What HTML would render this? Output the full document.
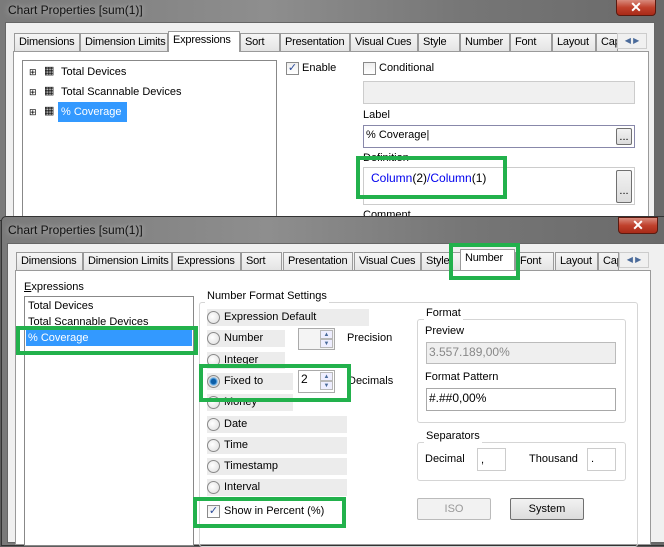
<!DOCTYPE html>
<html><head><meta charset="utf-8"><style>
*{margin:0;padding:0;box-sizing:border-box}
body{width:664px;height:540px;overflow:hidden;background:#5e5e5e;font-family:"Liberation Sans",sans-serif;font-size:11px;color:#000;position:relative}
.a{position:absolute}
.t{position:absolute;white-space:nowrap;font-size:11px;line-height:13px}
.win{position:absolute;background:linear-gradient(90deg,#7a7a7a,#8e8e8e 40%,#767676 70%,#6a6a6a);border:1px solid #333}
.title{position:absolute;left:8px;font-size:12px;color:#111;text-shadow:0 0 6px #ccc}
.close{position:absolute;width:40px;height:17px;background:linear-gradient(#d88a7c,#c0412c 50%,#a82a18);border:1px solid #5a1a10;border-radius:0 0 4px 4px;color:#fff;font-weight:bold;font-size:14px;text-align:center;line-height:15px}
.frame{position:absolute;background:#f0f0f0;border:1px solid #666}
.tab{position:absolute;height:18px;border:1px solid #9a9a9a;border-bottom:none;background:linear-gradient(#f6f6f6,#e4e4e4);font-size:11px;line-height:16px;padding-left:4px;white-space:nowrap;overflow:hidden;letter-spacing:-0.2px}
.tab.act{background:#fff;height:21px;z-index:2}
.panel{position:absolute;border:1px solid #9a9a9a;background:#fff}
.box{position:absolute;border:1px solid #a8a8a8;background:#fff}
.green{position:absolute;border:4px solid #22b14c;z-index:5}
.rad{position:absolute;width:13px;height:13px;border-radius:50%;border:1px solid #8a8a8a;background:radial-gradient(circle at 40% 40%,#fff,#ddd)}
.rbg{position:absolute;background:#ececec;height:17px}
.cb{position:absolute;width:13px;height:13px;border:1px solid #8a8a8a;background:linear-gradient(#eee,#fff);font-size:11px;line-height:11px;text-align:center;color:#2a4a9a}
.grp{position:absolute;border:1px solid #d5d5d5;border-radius:3px}
.btn{position:absolute;border:1px solid #707070;border-radius:2px;background:linear-gradient(#f2f2f2,#dcdcdc);text-align:center;font-size:11px;line-height:20px}
.spin{position:absolute;border:1px solid #aaa;background:#fff}
.arr{position:absolute;width:13px;height:9px;border:1px solid #b8b8b8;background:#eef;font-size:6px;line-height:8px;text-align:center;color:#4a6a9a}
</style></head><body>

<!-- TOP WINDOW -->
<div class="win" style="left:-1px;top:-1px;width:666px;height:222px"></div>
<div class="title" style="top:3px">Chart Properties [sum(1)]</div>
<div class="close" style="left:616px;top:-1px">✕</div>
<div class="frame" style="left:5px;top:22px;width:650px;height:200px;background:#f0f0f0"></div>
<div class="panel" style="left:13px;top:51px;width:636px;height:170px;background:#fff"></div>
<div class="tab" style="left:14px;top:33px;width:66px">Dimensions</div>
<div class="tab" style="left:80px;top:33px;width:88px">Dimension Limits</div>
<div class="tab act" style="left:168px;top:31px;width:72px">Expressions</div>
<div class="tab" style="left:240px;top:33px;width:40px">Sort</div>
<div class="tab" style="left:280px;top:33px;width:70px">Presentation</div>
<div class="tab" style="left:350px;top:33px;width:68px">Visual Cues</div>
<div class="tab" style="left:418px;top:33px;width:42px">Style</div>
<div class="tab" style="left:460px;top:33px;width:50px">Number</div>
<div class="tab" style="left:510px;top:33px;width:42px">Font</div>
<div class="tab" style="left:552px;top:33px;width:44px">Layout</div>
<div class="tab" style="left:596px;top:33px;width:22px">Cap</div>
<div class="a" style="left:617px;top:33px;width:30px;height:16px;background:#f0f0f0;border:1px solid #ccc;font-size:8px;color:#4a6a9a;line-height:14px;text-align:center">◀ ▶</div>
<div class="box" style="left:22px;top:60px;width:255px;height:160px;border-color:#888"></div>
<div class="t" style="left:29px;top:66px;font-size:9px">⊞</div><div class="t" style="left:44px;top:65px">▦</div><div class="t" style="left:61px;top:66px">Total Devices</div>
<div class="t" style="left:29px;top:86px;font-size:9px">⊞</div><div class="t" style="left:44px;top:85px">▦</div><div class="t" style="left:61px;top:86px">Total Scannable Devices</div>
<div class="t" style="left:29px;top:106px;font-size:9px">⊞</div><div class="t" style="left:44px;top:105px">▦</div>
<div class="a" style="left:58px;top:102px;width:69px;height:20px;background:#3399ff"></div><div class="t" style="left:61px;top:106px;color:#fff">% Coverage</div>
<div class="cb" style="left:286px;top:62px">✓</div><div class="t" style="left:302px;top:62px">Enable</div>
<div class="cb" style="left:363px;top:62px"></div><div class="t" style="left:379px;top:62px">Conditional</div>
<div class="box" style="left:363px;top:81px;width:272px;height:23px;background:#f0f0f0;border-color:#ccc"></div>
<div class="t" style="left:363px;top:109px">Label</div>
<div class="box" style="left:363px;top:125px;width:272px;height:23px;border-color:#88a"></div>
<div class="t" style="left:366px;top:129px">% Coverage|</div>
<div class="btn" style="left:616px;top:128px;width:16px;height:17px;line-height:16px">...</div>
<div class="t" style="left:363px;top:152px">Definition</div>
<div class="box" style="left:363px;top:167px;width:272px;height:38px;border-color:#ccc"></div>
<div class="t" style="left:371px;top:172px;font-size:12px;color:#0000ee">Column<span style="color:#000">(2)</span>/Column<span style="color:#000">(1)</span></div>
<div class="btn" style="left:616px;top:170px;width:16px;height:33px;line-height:40px">...</div>
<div class="green" style="left:356px;top:156px;width:151px;height:43px"></div>
<div class="t" style="left:363px;top:209px">Comment</div>

<!-- BOTTOM WINDOW -->
<div class="win" style="left:1px;top:216px;width:665px;height:330px;border-radius:5px 0 0 0"></div>
<div class="title" style="top:223px">Chart Properties [sum(1)]</div>
<div class="close" style="left:618px;top:217px">✕</div>
<div class="frame" style="left:7px;top:243px;width:658px;height:300px"></div>
<div class="panel" style="left:15px;top:270px;width:636px;height:275px;background:#fff"></div>
<div class="tab" style="left:16px;top:252px;width:67px">Dimensions</div>
<div class="tab" style="left:83px;top:252px;width:89px">Dimension Limits</div>
<div class="tab" style="left:172px;top:252px;width:69px">Expressions</div>
<div class="tab" style="left:241px;top:252px;width:41px">Sort</div>
<div class="tab" style="left:283px;top:252px;width:70px">Presentation</div>
<div class="tab" style="left:354px;top:252px;width:67px">Visual Cues</div>
<div class="tab" style="left:421px;top:252px;width:40px">Style</div>
<div class="tab act" style="left:460px;top:249px;width:55px">Number</div>
<div class="tab" style="left:515px;top:252px;width:39px">Font</div>
<div class="tab" style="left:555px;top:252px;width:43px">Layout</div>
<div class="tab" style="left:598px;top:252px;width:21px">Cap</div>
<div class="a" style="left:619px;top:252px;width:30px;height:16px;background:#f0f0f0;border:1px solid #ccc;font-size:8px;color:#4a6a9a;line-height:14px;text-align:center;z-index:3">◀ ▶</div>
<div class="green" style="left:449px;top:243px;width:71px;height:37px"></div>

<div class="t" style="left:24px;top:281px"><u>E</u>xpressions</div>
<div class="box" style="left:24px;top:296px;width:170px;height:250px;border-color:#888"></div>
<div class="t" style="left:28px;top:300px">Total Devices</div>
<div class="t" style="left:28px;top:316px">Total Scannable Devices</div>
<div class="a" style="left:26px;top:330px;width:166px;height:16px;background:#3399ff"></div>
<div class="t" style="left:28px;top:332px;color:#fff">% Coverage</div>
<div class="green" style="left:16px;top:326px;width:182px;height:29px"></div>

<div class="grp" style="left:199px;top:302px;width:439px;height:245px"></div>
<div class="t" style="left:205px;top:290px;background:#fff;padding:0 2px">Number Format Settings</div>
<div class="rbg" style="left:207px;top:309px;width:162px"></div><div class="rad" style="left:207px;top:311px"></div><div class="t" style="left:224px;top:311px">Expression Default</div>
<div class="rbg" style="left:207px;top:330px;width:78px"></div><div class="rad" style="left:207px;top:332px"></div><div class="t" style="left:224px;top:332px">Number</div>
<div class="spin" style="left:298px;top:328px;width:37px;height:22px;background:#f4f4f4"></div><div class="arr" style="left:320px;top:330px">▲</div><div class="arr" style="left:320px;top:339px">▼</div>
<div class="t" style="left:347px;top:332px">Precision</div>
<div class="rbg" style="left:207px;top:352px;width:78px"></div><div class="rad" style="left:207px;top:354px"></div><div class="t" style="left:224px;top:354px">Integer</div>
<div class="rbg" style="left:207px;top:394px;width:86px"></div><div class="rad" style="left:207px;top:396px"></div><div class="t" style="left:224px;top:396px">Money</div>
<div class="rbg" style="left:207px;top:373px;width:86px"></div><div class="rad" style="left:207px;top:375px;background:radial-gradient(circle,#0b5ea8 30%,#6ab0e8 45%,#ddd 60%)"></div><div class="t" style="left:224px;top:375px">Fixed to</div>
<div class="spin" style="left:298px;top:370px;width:37px;height:23px"></div><div class="t" style="left:301px;top:373px;font-size:12px">2</div><div class="arr" style="left:320px;top:372px">▲</div><div class="arr" style="left:320px;top:381px">▼</div>
<div class="t" style="left:348px;top:375px">Decimals</div>
<div class="green" style="left:199px;top:364px;width:152px;height:38px"></div>
<div class="rbg" style="left:207px;top:416px;width:140px"></div><div class="rad" style="left:207px;top:418px"></div><div class="t" style="left:224px;top:418px">Date</div>
<div class="rbg" style="left:207px;top:437px;width:140px"></div><div class="rad" style="left:207px;top:439px"></div><div class="t" style="left:224px;top:439px">Time</div>
<div class="rbg" style="left:207px;top:458px;width:140px"></div><div class="rad" style="left:207px;top:460px"></div><div class="t" style="left:224px;top:460px">Timestamp</div>
<div class="rbg" style="left:207px;top:479px;width:140px"></div><div class="rad" style="left:207px;top:481px"></div><div class="t" style="left:224px;top:481px">Interval</div>
<div class="cb" style="left:207px;top:505px">✓</div><div class="t" style="left:224px;top:505px">Show in Percent (%)</div>
<div class="green" style="left:193px;top:497px;width:153px;height:31px"></div>

<div class="grp" style="left:417px;top:319px;width:209px;height:104px"></div>
<div class="t" style="left:424px;top:307px;background:#fff;padding:0 2px">Format</div>
<div class="t" style="left:425px;top:325px">Preview</div>
<div class="box" style="left:426px;top:342px;width:190px;height:22px;background:#efefef;border-color:#bbb"></div>
<div class="t" style="left:429px;top:346px;color:#888;font-size:12px">3.557.189,00%</div>
<div class="t" style="left:425px;top:371px">Format Pattern</div>
<div class="box" style="left:426px;top:388px;width:190px;height:23px"></div>
<div class="t" style="left:429px;top:392px;font-size:12px">#.##0,00%</div>
<div class="grp" style="left:417px;top:442px;width:209px;height:39px"></div>
<div class="t" style="left:424px;top:430px;background:#fff;padding:0 2px">Separators</div>
<div class="t" style="left:425px;top:453px">Decimal</div>
<div class="box" style="left:477px;top:448px;width:29px;height:23px;border-color:#ccc"></div><div class="t" style="left:481px;top:454px">,</div>
<div class="t" style="left:529px;top:453px">Thousand</div>
<div class="box" style="left:587px;top:448px;width:29px;height:23px;border-color:#ccc"></div><div class="t" style="left:591px;top:453px">.</div>
<div class="btn" style="left:417px;top:498px;width:74px;height:22px;color:#999;border-color:#bbb;background:#f2f2f2">ISO</div>
<div class="btn" style="left:510px;top:498px;width:74px;height:22px">System</div>
</body></html>
